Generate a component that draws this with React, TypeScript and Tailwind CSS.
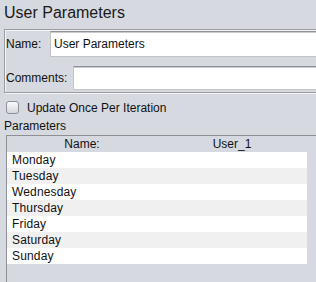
const days = ["Monday", "Tuesday", "Wednesday", "Thursday", "Friday", "Saturday", "Sunday"];

const App = () => {
  return (
    <div
      className="flex h-[282px] w-[316px] flex-col overflow-hidden bg-[#d6d9df] text-[12px] text-[#111]"
      style={{ fontFamily: '"Liberation Sans", Arial, sans-serif' }}
    >
      <div className="h-[29px] shrink-0 pl-[4px] pt-[4px] text-[16px] leading-[18px] text-[#1a1a1a]">
        User Parameters
      </div>

      <div className="ml-[4px] h-[64px] shrink-0 border-b border-l border-t border-[#9a9ca2] pb-[2px] shadow-[1px_1px_0_#f4f5f7,inset_1px_1px_0_#f4f5f7]">
        <div className="mt-[1px] flex h-[26px] items-center">
          <span className="w-[45px] pl-[1px] leading-[16px]">Name:</span>
          <div className="flex h-full flex-1 items-center border border-r-0 border-[#c2c4c8] border-t-[#8e9096] bg-white pl-[3px] leading-[16px] shadow-[inset_0_1px_0_#c9cbd0]">
            User Parameters
          </div>
        </div>
        <div className="mt-[9px] flex h-[24px] items-center">
          <span className="w-[68px] pl-[1px] leading-[16px]">Comments:</span>
          <div className="h-full flex-1 border border-r-0 border-[#c2c4c8] border-t-[#8e9096] bg-white shadow-[inset_0_1px_0_#c9cbd0]" />
        </div>
      </div>

      <div className="mt-[8px] flex h-[13px] shrink-0 items-center">
        <span className="ml-[6px] h-[13px] w-[13px] rounded-[3px] border border-[#8d9199] bg-gradient-to-b from-[#fbfbfc] to-[#d3d6dc]" />
        <span className="ml-[8px] leading-[14px]">Update Once Per Iteration</span>
      </div>

      <div className="mt-[5px] h-[14px] shrink-0 pl-[4px] leading-[14px]">Parameters</div>

      <div className="ml-[6px] mt-[2px] flex-1 border-l border-[#8e9096]">
        <div className="grid h-[17px] grid-cols-[150px_150px] border-t border-[#8e9096] leading-[16px]">
          <div className="text-center">Name:</div>
          <div className="text-center">User_1</div>
        </div>
        <div className="w-[300px]">
          {days.map((d, i) => (
            <div
              key={d}
              className={`h-[16px] pl-[5px] leading-[16px] tracking-[0.15px] ${i % 2 === 0 ? "bg-white" : "bg-[#f0f0f0]"}`}
            >
              {d}
            </div>
          ))}
        </div>
      </div>
    </div>
  );
};

export default App;
